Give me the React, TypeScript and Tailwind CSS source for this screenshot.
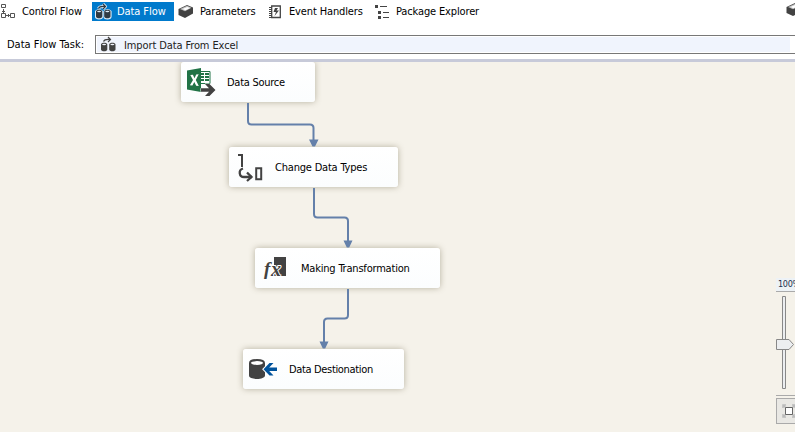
import type { ReactNode } from "react";

function Cylinders({ bright }: { bright?: boolean }) {
  const body = bright ? "#303a42" : "#424242";
  const rim = bright ? "#dcecf8" : "#f0f4fd";
  return (
    <svg width="17" height="18" viewBox="0 0 17 18" fill="none" className="block shrink-0">
      {bright && (
        <g stroke={rim} strokeWidth="2.200" fill={rim} strokeLinejoin="round">
          <path d="M3.500 5.500Q4.500 3 10 3.500M8 1l2.500 2.500L8 6" fill="none" strokeWidth="3" />
          <path d="M1 8.500v5c0 2.400 6 2.400 6 0v-5q-3-3-6 0zM9.500 8.500v5c0 2.400 6 2.400 6 0v-5q-3-3-6 0z" />
        </g>
      )}
      <path d="M3.500 5.500Q4.500 3 10 3.500M8 1l2.500 2.500L8 6" stroke={body} strokeWidth="1.200" />
      <path d="M1 8.500v5c0 2.400 6.300 2.400 6.300 0v-5C7.300 6.200 1 6.200 1 8.500zM9.200 8.500v5c0 2.400 6.300 2.400 6.300 0v-5c0-2.300-6.300-2.300-6.300 0z" fill={body} />
      <ellipse cx="4.100" cy="8.500" rx="2" ry=".8" fill={rim} />
      <ellipse cx="12.400" cy="8.500" rx="2" ry=".8" fill={rim} />
    </svg>
  );
}

function ControlFlowIcon() {
  return (
    <svg width="15" height="15" viewBox="0 0 15 15" fill="none" stroke="#555" className="block shrink-0">
      <path d="M1.500.5h4v3h-4zM1.500 9.500h4v4h-4zM10.500 9.500h4v4h-4zM3.500 5v4M2 7.500h3M6 11.500h4M8.500 10v3" />
    </svg>
  );
}

function PackageIcon() {
  return (
    <svg width="16" height="15" viewBox="0 0 16 15" className="block shrink-0">
      <path d="M.5 5 9 1l6 2.500v6L7 14 .5 11z" fill="#424242" />
      <path d="M2 5 9 1.800l4.500 1.900L7 7.300z" fill="#bdbdbd" />
      <path d="m4.500 5 4.700-2.100L12 4 7.500 6.300z" fill="#fff" />
    </svg>
  );
}

function EventIcon() {
  return (
    <svg width="13" height="14" viewBox="0 0 13 14" fill="none" className="block shrink-0">
      <path d="M2.700 1h8.600v11.500H2.700z" stroke="#444" strokeWidth="1.300" />
      <path d="M0 2.500h3M0 4.500h3M0 6.500h3M0 8.500h3M0 10.500h3M0 12.500h3" stroke="#444" />
      <path d="m6 3-1.500 4H7l-1.500 4L10 5.500H7.500L9 3z" fill="#444" />
    </svg>
  );
}

function ExplorerIcon() {
  return (
    <svg width="15" height="14" viewBox="0 0 15 14" fill="#444" className="block shrink-0">
      <path d="M0 0h3v3H0zM3 6h3v3H3zM3 11h3v3H3zM5 1h7v1H5zM8 7h6v1H8zM8 12h6v1H8z" />
    </svg>
  );
}

function ExcelSourceIcon() {
  return (
    <svg width="29" height="29" viewBox="0 0 29 29" className="block">
      <path d="M13.500 3.500H23v12H13.500" fill="#fff" stroke="#217346" />
      <path d="M14 5h3v2h-3zm4 0h4v2h-4zM14 8h3v2h-3zm4 0h4v2h-4zM14 11h3v2h-3zm4 0h4v2h-4z" fill="#217346" />
      <path d="M0 2.500 14 0v24L0 21.500z" fill="#217346" />
      <path d="m3.300 7 2.600-.2 1.600 3.400 1.700-3.700 2.500-.2-2.900 5.600 3 6-2.600-.2-1.900-3.800-1.900 3.500-2.500-.2L6 12z" fill="#fff" />
      <path d="M14 20.200h8L18 16h4.500l6 6-6 6H18l4-4.200h-8z" fill="#424242" stroke="#fff" strokeWidth="1" paintOrder="stroke" />
    </svg>
  );
}

function ConvertIcon() {
  return (
    <svg width="26" height="29" viewBox="0 0 26 29" fill="none" stroke="#424242" className="block">
      <path d="M0 2h4v12" strokeWidth="2" />
      <path d="M5 15.500C0 17 1 24 6 24h8" strokeWidth="2.300" />
      <path d="m9 19.500 4.500 4.500L9 28" strokeWidth="2.300" />
      <path d="M18.200 15.200h5v11h-5z" strokeWidth="2" />
    </svg>
  );
}

function FunctionIcon() {
  return (
    <svg width="27" height="27" viewBox="0 0 27 27" className="block overflow-visible">
      <path d="M13 2h12v19H13z" fill="#424242" />
      <g fill="#424242" stroke="#fff" strokeWidth="2" paintOrder="stroke" className="font-['Liberation_Serif',serif] font-bold italic">
        <text x="3" y="20" fontSize="19">f</text>
        <text x="10" y="20.500" fontSize="20">x</text>
      </g>
    </svg>
  );
}

function DestinationIcon() {
  return (
    <svg width="29" height="21" viewBox="0 0 29 21" className="block">
      <path d="M0 4v12.500c0 4.600 16 4.600 16 0V4z" fill="#424242" />
      <ellipse cx="8" cy="4" rx="7" ry="2.900" fill="#fff" stroke="#424242" strokeWidth="2" />
      <path d="m14.500 10.200 6-6.200h4l-4.300 4.400H28v3.700h-7.800l4.300 4.400h-4z" fill="#00539c" stroke="#fff" strokeWidth="2" paintOrder="stroke" />
    </svg>
  );
}

function Tab({ icon, children, className }: { icon: ReactNode; children: string; className: string }) {
  return <div className={`flex h-[19px] shrink-0 items-center ${className}`}>{icon}<span>{children}</span></div>;
}

function Node({ icon, label, className, labelClass }: { icon: ReactNode; label: string; className: string; labelClass: string }) {
  return (
    <div className={`absolute flex h-10 items-center rounded-[3px] bg-gradient-to-b from-white to-[#fbfdfe] pl-1.5 shadow-[0_0_6px_rgba(90,80,50,0.4)] ${className}`}>
      <div className="flex w-10 shrink-0">{icon}</div>
      <span className={`pt-0.5 text-black ${labelClass}`}>{label}</span>
    </div>
  );
}

export default function App() {
  return (
    <div className="flex h-[432px] w-[795px] flex-col overflow-hidden whitespace-nowrap bg-white font-['DejaVu_Sans_Condensed','DejaVu_Sans',sans-serif] text-[11px] leading-[14px] text-black [font-stretch:condensed]">
      <nav className="flex h-[35px] items-start pt-0.5">
        <Tab icon={<ControlFlowIcon />} className="w-[92px] gap-[7px] tracking-[-0.13px]">Control Flow</Tab>
        <Tab icon={<Cylinders bright />} className="w-[82px] gap-[5px] bg-[#007acc] pl-[3px] tracking-[-0.08px] text-white">Data Flow</Tab>
        <Tab icon={<PackageIcon />} className="ml-1 w-[91px] gap-1.5 tracking-[-0.1px]">Parameters</Tab>
        <Tab icon={<EventIcon />} className="w-[106px] gap-[7px] tracking-[-0.14px]">Event Handlers</Tab>
        <Tab icon={<ExplorerIcon />} className="w-[106px] gap-1.5 tracking-[-0.14px]">Package Explorer</Tab>
        <div className="-mt-0.5 ml-auto w-[9px] overflow-hidden pt-0.5"><PackageIcon /></div>
      </nav>

      <div className="flex h-[24px] items-start">
        <span className="w-[95px] pl-[7px] pt-[3px] tracking-[0px]">Data Flow Task:</span>
        <div className="flex h-[19px] flex-1 border-y border-l border-[#777] p-px pr-[5px]">
          <div className="flex flex-1 items-center gap-[7px] bg-[#f0f4fd] pl-[3px] tracking-[-0.11px]">
            <Cylinders />
            <span className="pt-0.5 text-[#222]">Import Data From Excel</span>
          </div>
        </div>
      </div>

      <div className="h-[3px] bg-[#c7cad9]" />
      <main className="relative flex-1 overflow-hidden bg-[#f5f2ea]">
        <Node icon={<ExcelSourceIcon />} label="Data Source" className="left-[181px] top-0 w-[134px]" labelClass="tracking-[-0.27px]" />
        <Node icon={<ConvertIcon />} label="Change Data Types" className="left-[229px] top-[85px] w-[169px] [&>div]:pl-[3px]" labelClass="tracking-[-0.2px]" />
        <Node icon={<FunctionIcon />} label="Making Transformation" className="left-[255px] top-[186px] w-[185px]" labelClass="tracking-[-0.2px]" />
        <Node icon={<DestinationIcon />} label="Data Destionation" className="left-[243px] top-[287px] w-[161px]" labelClass="tracking-[-0.34px]" />

        <svg width="795" height="370" viewBox="0 62 795 370" className="pointer-events-none absolute left-0 top-0">
          <g fill="none" stroke="#6480aa" strokeWidth="2">
            <path d="M248 103v18q0 3.500 3.500 3.500H310q3.500 0 3.500 3.500v13" />
            <path d="M314 188v26q0 3.500 3.500 3.500h27q3.500 0 3.500 3.500v20" />
            <path d="M348 289v26q0 3.500-3.500 3.500h-17q-3.500 0-3.500 3.500v20" />
          </g>
          <path d="M309 139.500h9.500l-3.500 7h-2.500zM343.500 240.500h9l-3.300 7h-2.400zM319.500 341.500h9l-3.300 7h-2.400z" fill="#6480aa" />
        </svg>

        <div className="absolute left-[776px] top-[216px] flex w-[30px] flex-col">
          <div className="h-[14px] border-b border-[#aaa] bg-[#edf2f6] pl-[2px] text-[9px] leading-[12px] tracking-[-0.3px] text-[#203050]">100%</div>
          <svg width="20" height="97" viewBox="0 0 20 97" fill="#eceef0" stroke="#888" className="block">
            <path d="M6.500 4.500h3v92h-3z" />
            <path d="M.5 47.500H13l4.500 5-4.500 5H.5z" />
          </svg>
          <div className="mt-[6px] h-px bg-[#aaa]" />
          <div className="mt-0.5 flex h-[26px] w-[26px] items-center justify-center border border-[#aaa] bg-[#e9e8e4]">
            <svg width="14" height="14" viewBox="0 0 14 14" fill="none" className="block">
              <path d="M1 4V1h3M10 1h3v3M13 10v3h-3M4 13H1v-3M1 1l3 3m6 0 3-3M1 13l3-3m6 0 3 3" stroke="#bbb" strokeWidth="1.500" />
              <path d="M3.500 3.500h7v7h-7z" fill="#fff" stroke="#666" />
            </svg>
          </div>
        </div>
      </main>
    </div>
  );
}
